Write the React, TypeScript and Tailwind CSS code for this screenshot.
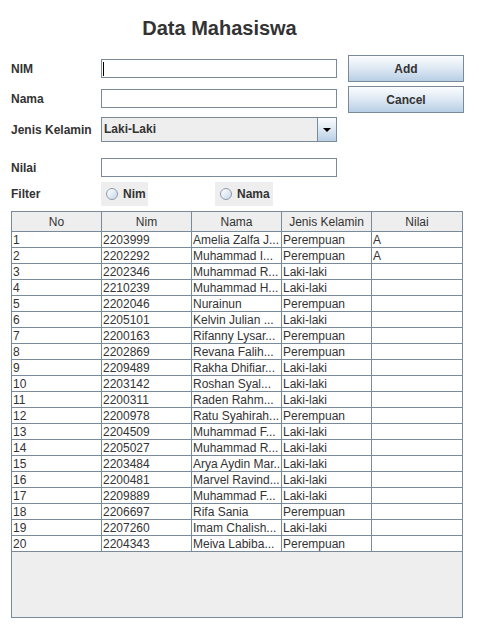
import React from "react";

const rows: [string, string, string, string, string][] = [
  ["1", "2203999", "Amelia Zalfa J...", "Perempuan", "A"],
  ["2", "2202292", "Muhammad I...", "Perempuan", "A"],
  ["3", "2202346", "Muhammad R...", "Laki-laki", ""],
  ["4", "2210239", "Muhammad H...", "Laki-laki", ""],
  ["5", "2202046", "Nurainun", "Perempuan", ""],
  ["6", "2205101", "Kelvin Julian ...", "Laki-laki", ""],
  ["7", "2200163", "Rifanny Lysar...", "Perempuan", ""],
  ["8", "2202869", "Revana Falih...", "Perempuan", ""],
  ["9", "2209489", "Rakha Dhifiar...", "Laki-laki", ""],
  ["10", "2203142", "Roshan Syal...", "Laki-laki", ""],
  ["11", "2200311", "Raden Rahm...", "Laki-laki", ""],
  ["12", "2200978", "Ratu Syahirah...", "Perempuan", ""],
  ["13", "2204509", "Muhammad F...", "Laki-laki", ""],
  ["14", "2205027", "Muhammad R...", "Laki-laki", ""],
  ["15", "2203484", "Arya Aydin Mar...", "Laki-laki", ""],
  ["16", "2200481", "Marvel Ravind...", "Laki-laki", ""],
  ["17", "2209889", "Muhammad F...", "Laki-laki", ""],
  ["18", "2206697", "Rifa Sania", "Perempuan", ""],
  ["19", "2207260", "Imam Chalish...", "Laki-laki", ""],
  ["20", "2204343", "Meiva Labiba...", "Perempuan", ""],
];

const headers = ["No", "Nim", "Nama", "Jenis Kelamin", "Nilai"];

function Radio({ label, width }: { label: string; width: string }) {
  return (
    <div className={`flex items-center h-[24px] bg-[#eeeeee] ${width}`}>
      <span className="ml-[5px] w-[12px] h-[12px] rounded-full border border-[#8c9bab] bg-linear-to-br from-white to-[#c9d8e8]" />
      <span className="ml-[5px] text-[12px] font-bold">{label}</span>
    </div>
  );
}

export default function App() {
  return (
    <div className="w-[479px] h-[642px] bg-white text-[#333333] font-['Liberation_Sans',Arial,sans-serif]">
      {/* Title */}
      <div className="w-[439px] h-[55px] pt-[16px] text-center text-[20px] leading-[24px] font-bold">
        Data Mahasiswa
      </div>

      {/* Form */}
      <div className="flex">
        <div className="pl-[11px] pt-[4px]">
          <div className="flex items-center h-[19px]">
            <span className="w-[90px] text-[12px] font-bold">NIM</span>
            <div className="w-[236px] h-[19px] border border-[#7a8a99] bg-white flex items-center">
              <span className="ml-[1px] w-px h-[14px] bg-black" />
            </div>
          </div>
          <div className="flex items-center h-[19px] mt-[11px]">
            <span className="w-[90px] text-[12px] font-bold">Nama</span>
            <div className="w-[236px] h-[19px] border border-[#7a8a99] bg-white" />
          </div>
          <div className="flex items-center h-[25px] mt-[9px]">
            <span className="w-[90px] text-[12px] font-bold">Jenis Kelamin</span>
            <div className="w-[236px] h-[25px] border border-[#7a8a99] bg-[#eeeeee] flex">
              <span className="flex-1 pl-[2px] text-[12px] font-bold leading-[23px]">Laki-Laki</span>
              <div className="w-[19px] h-full border-l border-[#7a8a99] bg-linear-to-b from-[#fbfdff] via-[#dde8f3] to-[#b8cfe5] flex items-center justify-center">
                <span className="w-0 h-0 border-l-[4px] border-r-[4px] border-t-[4px] border-l-transparent border-r-transparent border-t-black" />
              </div>
            </div>
          </div>
          <div className="flex items-center h-[19px] mt-[16px]">
            <span className="w-[90px] text-[12px] font-bold">Nilai</span>
            <div className="w-[236px] h-[19px] border border-[#7a8a99] bg-white" />
          </div>
          <div className="flex items-center h-[24px] mt-[5px]">
            <span className="w-[90px] text-[12px] font-bold">Filter</span>
            <Radio label="Nim" width="w-[47px]" />
            <div className="w-[67px]" />
            <Radio label="Nama" width="w-[58px]" />
          </div>
        </div>

        <div className="ml-[11px] flex flex-col gap-[4px]">
          <button className="w-[116px] h-[27px] border border-[#7a8a99] bg-linear-to-b from-[#fbfdff] via-[#dde8f3] to-[#b8cfe5] text-[12px] font-bold text-[#333333]">
            Add
          </button>
          <button className="w-[116px] h-[27px] border border-[#7a8a99] bg-linear-to-b from-[#fbfdff] via-[#dde8f3] to-[#b8cfe5] text-[12px] font-bold text-[#333333]">
            Cancel
          </button>
        </div>
      </div>

      {/* Table */}
      <div className="ml-[11px] mt-[5px] w-[452px] h-[407px] border border-[#7a8a99] bg-[#eeeeee]">
        <div className="flex h-[20px] border-b border-[#7a8a99] bg-[#eeeeee]">
          {headers.map((h, i) => (
            <div
              key={h}
              className={`w-[90px] pt-[1px] text-center text-[12px] leading-[18px] ${i < 4 ? "border-r border-[#7a8a99]" : ""}`}
            >
              {h}
            </div>
          ))}
        </div>
        {rows.map((r) => (
          <div key={r[0]} className="flex h-[16px] border-b border-[#7a8a99] bg-white">
            {r.map((c, i) => (
              <div
                key={i}
                className={`w-[90px] pl-[1px] text-[12px] leading-[16px] whitespace-nowrap overflow-hidden ${i < 4 ? "border-r border-[#7a8a99]" : ""}`}
              >
                {c}
              </div>
            ))}
          </div>
        ))}
      </div>
    </div>
  );
}
